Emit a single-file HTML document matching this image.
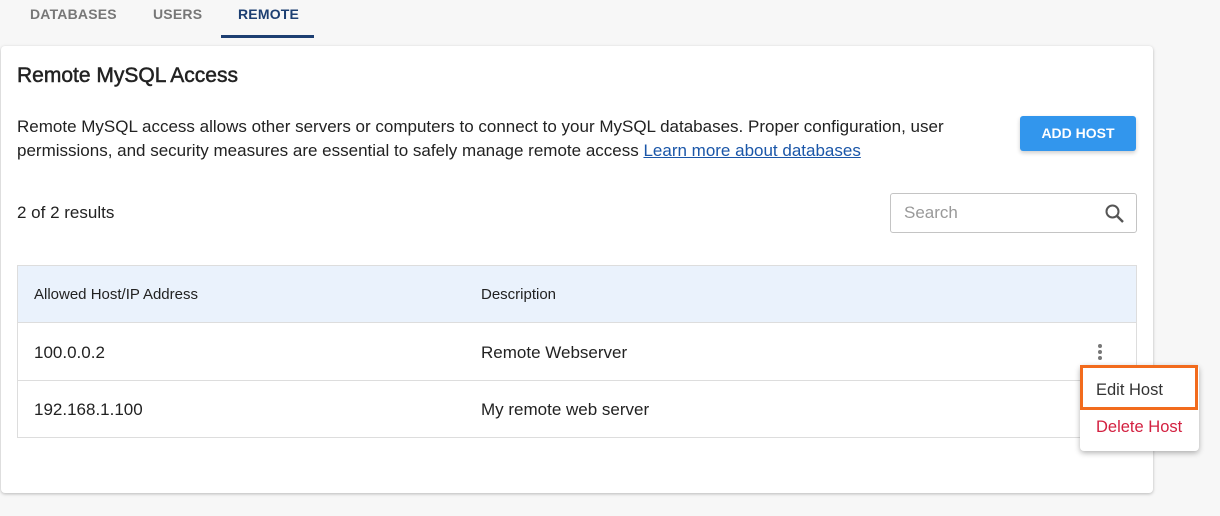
<!DOCTYPE html>
<html><head><style>
*{box-sizing:border-box;margin:0;padding:0}
body{width:1220px;height:516px;background:#f7f7f7;font-family:"Liberation Sans",sans-serif;position:relative;overflow:hidden;color:#222}
.tab{position:absolute;top:6px;font-size:14px;font-weight:bold;letter-spacing:.2px;color:#777}
.card{position:absolute;left:1px;top:46px;width:1152px;height:447px;background:#fff;border-radius:4px;box-shadow:0 1px 3px rgba(0,0,0,.25)}
.abs{position:absolute}
</style></head><body>
<div class="tab" style="left:30px">DATABASES</div>
<div class="tab" style="left:153px">USERS</div>
<div class="tab" style="left:238px;color:#1d3f72">REMOTE</div>
<div class="abs" style="left:221px;top:35px;width:93px;height:3px;background:#1d3f72"></div>
<div class="card"></div>
<div class="abs" style="left:17px;top:64px;font-size:21px;color:#222;-webkit-text-stroke:.5px #222">Remote MySQL Access</div>
<div class="abs" style="left:17px;top:115px;width:960px;font-size:17px;line-height:24px;color:#222">Remote MySQL access allows other servers or computers to connect to your MySQL databases. Proper configuration, user permissions, and security measures are essential to safely manage remote access <span style="color:#1a56a8;text-decoration:underline">Learn more about databases</span></div>
<div class="abs" style="left:1020px;top:116px;width:116px;height:35px;background:#3296ed;border-radius:3px;color:#fff;font-weight:bold;font-size:14px;text-align:center;line-height:35px;box-shadow:0 2px 4px rgba(0,0,0,.2)">ADD HOST</div>
<div class="abs" style="left:17px;top:203px;font-size:17px">2 of 2 results</div>
<div class="abs" style="left:890px;top:193px;width:247px;height:40px;border:1px solid #c4c4c4;border-radius:3px;"></div>
<div class="abs" style="left:904px;top:203px;font-size:17px;color:#999">Search</div>
<svg class="abs" style="left:1104px;top:203px" width="22" height="22" viewBox="0 0 22 22"><circle cx="8.5" cy="8.5" r="6" stroke="#555" stroke-width="2" fill="none"/><path d="M13 13l6 6" stroke="#555" stroke-width="2.4"/></svg>
<div class="abs" style="left:17px;top:265px;width:1120px;height:173px;border:1px solid #ddd"></div>
<div class="abs" style="left:18px;top:266px;width:1118px;height:57px;background:#eaf2fc;border-bottom:1px solid #ddd"></div>
<div class="abs" style="left:34px;top:286px;font-size:15px">Allowed Host/IP Address</div>
<div class="abs" style="left:481px;top:286px;font-size:15px">Description</div>
<div class="abs" style="left:18px;top:380px;width:1118px;height:1px;background:#ddd"></div>
<div class="abs" style="left:34px;top:343px;font-size:17px">100.0.0.2</div>
<div class="abs" style="left:481px;top:343px;font-size:17px">Remote Webserver</div>
<div class="abs" style="left:34px;top:400px;font-size:17px">192.168.1.100</div>
<div class="abs" style="left:481px;top:400px;font-size:17px">My remote web server</div>
<svg class="abs" style="left:1096px;top:343px" width="8" height="18"><circle cx="4" cy="3" r="2" fill="#777"/><circle cx="4" cy="9" r="2" fill="#777"/><circle cx="4" cy="15" r="2" fill="#777"/></svg>
<div class="abs" style="left:1080px;top:365px;width:119px;height:86px;background:#fff;border-radius:4px;box-shadow:0 2px 6px rgba(0,0,0,.3)"></div>
<div class="abs" style="left:1080px;top:365px;width:118px;height:45px;border:3px solid #f26b1d"></div>
<div class="abs" style="left:1096px;top:381px;font-size:16.5px;color:#333">Edit Host</div>
<div class="abs" style="left:1096px;top:418px;font-size:16.5px;color:#d32040">Delete Host</div>
</body></html>
